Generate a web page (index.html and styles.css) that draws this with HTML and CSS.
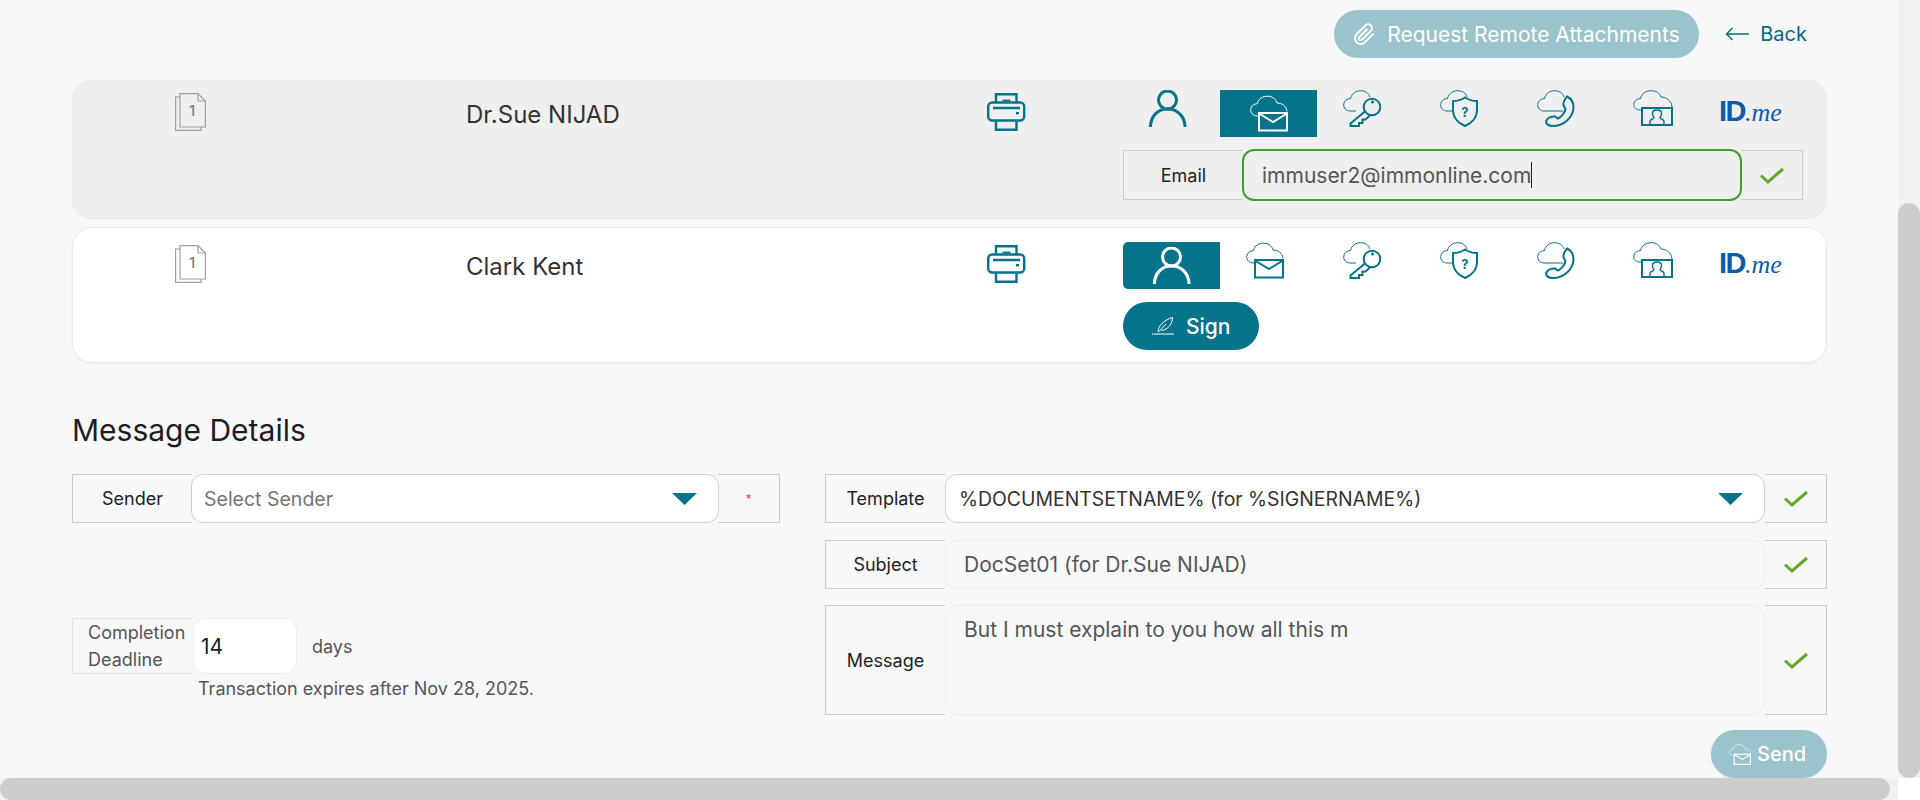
FILE: index.html
```html
<!DOCTYPE html>
<html lang="en">
<head>
<meta charset="utf-8">
<title>Message Details</title>
<link rel="stylesheet" href="styles.css">
</head>
<body>
<svg class="sprite" xmlns="http://www.w3.org/2000/svg">
  <symbol id="i-doc" viewBox="0 0 31 38">
    <path d="M5 .6H23L30.400 8V34H5Z" fill="none" stroke="currentColor" stroke-width="1.200"/>
    <path d="M23 .6V8H30.400M5 4H.6V37.400H26V34" fill="none" stroke="currentColor" stroke-width="1.200"/>
    <text x="17" y="23" text-anchor="middle" class="doc-num">1</text>
  </symbol>
  <symbol id="i-print" viewBox="0 0 40 38">
    <g fill="none" stroke="currentColor" stroke-width="2.400">
      <rect x="1.200" y="9.500" width="36" height="18" rx="4"/>
      <path d="M9 9V1.200H29.500V9M9 27V36.800H29.500V27M6 15H33"/>
      <path d="M15.500 7.500H23.500" stroke-width="1.800"/>
    </g>
    <rect x="29" y="19" width="3" height="2.400" fill="currentColor"/>
  </symbol>
  <symbol id="i-user" viewBox="0 0 38 37">
    <g fill="none" stroke="currentColor" stroke-width="3">
      <circle cx="18.500" cy="10" r="9"/>
      <path d="M1.500 37C1.500 26 9 19 18.500 19S36 26 36 37"/>
    </g>
  </symbol>
  <symbol id="i-mail" viewBox="0 0 38 36">
    <path d="M8 20.500C3 20.500 .5 17.500 .7 14C1 10.500 4 8.200 7.200 8.200C8.500 3 13 .5 18 .7C23 1 26 3.800 27 7.500C32 7.500 36.500 10.500 37 16" fill="none" stroke="currentColor"/>
    <g fill="none" stroke="currentColor" stroke-width="2">
      <rect x="9" y="17.500" width="28" height="17.500"/>
      <path d="M9 18L23 26.500L37 18"/>
    </g>
  </symbol>
  <symbol id="i-key" viewBox="0 0 38 37">
    <path d="M13 21H7C3 21 .5 18 .7 14.500C1 11 4 8.500 7.500 8.500C8.500 3.500 13 .7 17.500 .7C22 .7 25.500 3 27 7" fill="none" stroke="currentColor"/>
    <g fill="none" stroke="currentColor" stroke-width="2">
      <circle cx="29" cy="17" r="8.300"/>
      <path d="M22.500 21L7.500 33.500V36H16V33H19.500V29.500H22.500L27 25.200"/>
    </g>
    <circle cx="29.500" cy="12" r="1.500" fill="currentColor"/>
  </symbol>
  <symbol id="i-shield" viewBox="0 0 38 37">
    <path d="M12 21H7C3 21 .5 18 .7 14.500C1 11 4 8.500 7.500 8.500C8.500 3.500 13 .7 17.500 .7C22 .7 26 3 27 7" fill="none" stroke="currentColor"/>
    <path d="M13 11C19 11 22 9.500 25 7.500C28 9.500 32 11 37 11V20C37 28 31 33.500 25 36C19 33.500 13 28 13 20Z" fill="none" stroke="currentColor" stroke-width="2"/>
    <text x="25" y="27" text-anchor="middle" class="icon-q">?</text>
  </symbol>
  <symbol id="i-phone" viewBox="0 0 38 37">
    <path d="M26 21H7C3 21 .5 18 .7 14.500C1 11 4 8.500 7.500 8.500C8.500 3.500 13 .7 17.500 .7C22 .7 26 3 27 7" fill="none" stroke="currentColor"/>
    <path d="M30 6.500C34 8.500 36.500 12 36.500 17C36.500 27 27 36 16 36C11 36 8 33.500 9.500 30.500C11 27.500 15 26 18 26.500L21 28.500C24.500 27 28 22.500 28.500 19L26.500 15.500C26 13 28 9 30 6.500Z" fill="none" stroke="currentColor" stroke-width="2"/>
  </symbol>
  <symbol id="i-face" viewBox="0 0 40 36">
    <path d="M9 20H7C3 20 .7 17.500 .7 14.500C1 11 4 8.500 7.500 8.500C8.500 3.500 13 .7 18 .7C23 .7 27 3 28 7C33 7 38.500 10.500 39 17" fill="none" stroke="currentColor"/>
    <rect x="9" y="18" width="30" height="17" fill="none" stroke="currentColor" stroke-width="2"/>
    <path d="M17 34V31C17 29.500 21 29 21 27.500C19.500 26 19.500 24.500 19.500 23.500C19.500 21 21 20 24 20C27 20 28.500 21 28.500 23.500C28.500 24.500 28.500 26 27 27.500C27 29 31 29.500 31 31V34" fill="none" stroke="currentColor" stroke-width="1.400"/>
  </symbol>
  <symbol id="i-check" viewBox="0 0 24 17">
    <path d="M1 8.500L8 15L23 2" fill="none" stroke="currentColor" stroke-width="3"/>
  </symbol>
  <symbol id="i-caret" viewBox="0 0 25 12">
    <path d="M0 0H25L12.500 12Z" fill="currentColor"/>
  </symbol>
  <symbol id="i-clip" viewBox="0 0 24 24">
    <path d="M21.440 11.050l-9.190 9.190a6 6 0 0 1-8.490-8.490l9.190-9.190a4 4 0 0 1 5.660 5.660l-9.200 9.190a2 2 0 0 1-2.830-2.830l8.490-8.480" fill="none" stroke="currentColor" stroke-width="2"/>
  </symbol>
  <symbol id="i-arrow" viewBox="0 0 24 14">
    <path d="M24 7H1.500M7.500 1L1.500 7L7.500 13" fill="none" stroke="currentColor" stroke-width="1.400"/>
  </symbol>
  <symbol id="i-quill" viewBox="0 0 22 18">
    <path d="M2 17H22" stroke="currentColor" fill="none"/>
    <circle cx=".8" cy="17" r=".8" fill="currentColor"/>
    <path d="M6 14.500C6 9 12 3 20.500 .5C20.500 7 16 12.500 9.500 13.500M6.500 15L14 7" fill="none" stroke="currentColor"/>
  </symbol>
</svg>

<div class="shell">
  <main class="page">
    <div class="toolbar">
      <button class="pill pill-muted pill-request" type="button">
        <svg class="icon-clip"><use href="#i-clip"/></svg>
        <span>Request Remote Attachments</span>
      </button>
      <a class="back-link">
        <svg class="icon-arrow"><use href="#i-arrow"/></svg>
        <span>Back</span>
      </a>
    </div>

    <section class="card card-selected">
      <div class="doc-cell"><svg class="icon-doc"><use href="#i-doc"/></svg></div>
      <div class="signer-name">Dr.Sue NIJAD</div>
      <div class="print-cell"><svg class="icon-print"><use href="#i-print"/></svg></div>
      <div class="auth">
        <div class="auth-tabs">
          <div class="auth-tab"><svg class="icon-user"><use href="#i-user"/></svg></div>
          <div class="auth-tab is-active"><svg class="icon-cloud"><use href="#i-mail"/></svg></div>
          <div class="auth-tab"><svg class="icon-cloud"><use href="#i-key"/></svg></div>
          <div class="auth-tab"><svg class="icon-cloud"><use href="#i-shield"/></svg></div>
          <div class="auth-tab"><svg class="icon-cloud"><use href="#i-phone"/></svg></div>
          <div class="auth-tab"><svg class="icon-face"><use href="#i-face"/></svg></div>
          <div class="auth-tab"><span class="idme"><b>ID</b><i>.me</i></span></div>
        </div>
        <div class="field email-field">
          <div class="field-label">Email</div>
          <div class="field-control control-focus">immuser2@immonline.com<span class="text-caret"></span></div>
          <div class="field-end"><svg class="icon-check"><use href="#i-check"/></svg></div>
        </div>
      </div>
    </section>

    <section class="card card-plain">
      <div class="doc-cell"><svg class="icon-doc"><use href="#i-doc"/></svg></div>
      <div class="signer-name">Clark Kent</div>
      <div class="print-cell"><svg class="icon-print"><use href="#i-print"/></svg></div>
      <div class="auth">
        <div class="auth-tabs">
          <div class="auth-tab is-active is-first"><svg class="icon-user"><use href="#i-user"/></svg></div>
          <div class="auth-tab"><svg class="icon-cloud"><use href="#i-mail"/></svg></div>
          <div class="auth-tab"><svg class="icon-cloud"><use href="#i-key"/></svg></div>
          <div class="auth-tab"><svg class="icon-cloud"><use href="#i-shield"/></svg></div>
          <div class="auth-tab"><svg class="icon-cloud"><use href="#i-phone"/></svg></div>
          <div class="auth-tab"><svg class="icon-face"><use href="#i-face"/></svg></div>
          <div class="auth-tab"><span class="idme"><b>ID</b><i>.me</i></span></div>
        </div>
        <button class="pill pill-solid pill-sign" type="button">
          <svg class="icon-quill"><use href="#i-quill"/></svg>
          <span>Sign</span>
        </button>
      </div>
    </section>

    <h2 class="section-title">Message Details</h2>

    <div class="details">
      <div class="details-left">
        <div class="field">
          <div class="field-label">Sender</div>
          <div class="field-control control-select control-sender">
            <span class="placeholder">Select Sender</span>
            <svg class="icon-caret"><use href="#i-caret"/></svg>
          </div>
          <div class="field-end required">*</div>
        </div>
        <div class="deadline">
          <div class="deadline-label">Completion Deadline</div>
          <div class="deadline-input">14</div>
          <div class="deadline-unit">days</div>
        </div>
        <div class="deadline-note">Transaction expires after Nov 28, 2025.</div>
      </div>

      <div class="details-right">
        <div class="field">
          <div class="field-label">Template</div>
          <div class="field-control control-select control-template">
            <span>%DOCUMENTSETNAME% (for %SIGNERNAME%)</span>
            <svg class="icon-caret"><use href="#i-caret"/></svg>
          </div>
          <div class="field-end"><svg class="icon-check"><use href="#i-check"/></svg></div>
        </div>
        <div class="field">
          <div class="field-label">Subject</div>
          <div class="field-control control-readonly">DocSet01 (for Dr.Sue NIJAD)</div>
          <div class="field-end"><svg class="icon-check"><use href="#i-check"/></svg></div>
        </div>
        <div class="field field-tall">
          <div class="field-label">Message</div>
          <div class="field-control control-readonly control-area">But I must explain to you how all this m</div>
          <div class="field-end"><svg class="icon-check"><use href="#i-check"/></svg></div>
        </div>
      </div>
    </div>

    <div class="send-row">
      <button class="pill pill-muted pill-send" type="button">
        <svg class="icon-send"><use href="#i-mail"/></svg>
        <span>Send</span>
      </button>
    </div>
  </main>

  <div class="vscroll"><div class="vscroll-thumb"></div></div>
  <div class="hscroll"><div class="hscroll-thumb"></div></div>
  <div class="corner"></div>
</div>
</body>
</html>
```

FILE: styles.css
```css
* { box-sizing: border-box; }

html, body {
  margin: 0;
  height: 800px;
  overflow: hidden;
}

body {
  font-family: Inter, "Liberation Sans", sans-serif;
  color: #2b2b2b;
  background: #f7f8fa;
}

.sprite { display: none; }

.doc-num { font: 500 15px Inter, sans-serif; fill: #808080; }
.icon-q { font: 700 13px Inter, sans-serif; fill: currentColor; }

.shell {
  display: grid;
  grid-template-columns: 1898px 22px;
  grid-template-rows: 778px 22px;
  height: 800px;
}

.page {
  padding: 10px 71px 0 72px;
  overflow: hidden;
}

/* Scrollbars */
.vscroll { background: #f1f1f1; padding-top: 203px; }
.vscroll-thumb { height: 575px; background: #cdcdcd; border-radius: 11px; }
.hscroll { background: #f1f1f1; }
.hscroll-thumb { width: 1890px; height: 22px; background: #cdcdcd; border-radius: 11px; }
.corner { background: #fff; }

/* Toolbar */
.toolbar {
  display: flex;
  justify-content: flex-end;
  align-items: center;
  height: 48px;
  padding-right: 20px;
}

.pill {
  display: inline-flex;
  align-items: center;
  border: 0;
  color: #fff;
  font-family: Inter, sans-serif;
  border-radius: 24px;
}

.pill-muted { background: #9ac3cc; }
.pill-solid { background: #05738a; }

.pill-request {
  width: 365px;
  height: 48px;
  padding: 0 0 0 19px;
  font-size: 21px;
  font-weight: 400;
  gap: 11px;
}

.icon-clip { width: 23px; height: 23px; }

.back-link {
  display: flex;
  align-items: center;
  gap: 11px;
  margin-left: 26px;
  color: #05697f;
  font-size: 20px;
}

.icon-arrow { width: 24px; height: 14px; }

/* Signer cards */
.card {
  display: grid;
  grid-template-columns: 394px 519px 137px 1fr;
  align-items: start;
  border: 1px solid #e9eaec;
  border-radius: 20px;
}

.card-selected {
  height: 139px;
  margin-top: 22px;
  padding-top: 9px;
  background: #efefef;
}

.card-plain {
  height: 136px;
  margin-top: 8px;
  padding-top: 14px;
  background: #fff;
  box-shadow: 0 1px 2px rgba(0, 0, 0, .05);
}

.doc-cell { padding: 3px 0 0 102px; color: #a0a0a0; }
.icon-doc { display: block; width: 31px; height: 38px; }

.signer-name {
  font-size: 24px;
  line-height: 44px;
  margin: 3px 0 0 -1px;
  color: #333;
}

.print-cell { padding-top: 3px; color: #05738a; }
.icon-print { display: block; width: 40px; height: 38px; margin-left: 1px; }

.auth { padding-right: 23px; }

.auth-tabs {
  display: grid;
  grid-template-columns: repeat(7, 97.14px);
  height: 47px;
}

.auth-tab {
  display: flex;
  justify-content: center;
  padding-right: 8px;
  color: #05738a;
}

.auth-tab.is-active {
  background: #05738a;
  color: #fff;
  padding-right: 0;
  align-items: center;
}
.auth-tab.is-first { border-radius: 5px 0 0 5px; }

.icon-user { width: 38px; height: 37px; }
.icon-cloud { width: 38px; height: 37px; }
.icon-face { width: 40px; height: 36px; }

.idme {
  display: flex;
  align-items: baseline;
  margin-top: 8px;
  color: #0c5cab;
  line-height: 26px;
}
.idme b { font: 700 29px/26px "Liberation Sans", sans-serif; letter-spacing: -1.500px; }
.idme i { font: italic 400 26px/26px "Liberation Serif", serif; }

/* Form fields */
.field {
  display: flex;
  height: 49px;
  font-size: 18px;
}

.field-tall { height: 110px; }

.field-label {
  flex: 0 0 120px;
  display: flex;
  align-items: center;
  justify-content: center;
  border: 1px solid #cbcbcb;
  border-right: 0;
  color: #222;
}

.field-control {
  flex: 1;
  min-width: 0;
  display: flex;
  align-items: center;
  border-radius: 12px;
}

.field-end {
  flex: 0 0 62px;
  display: flex;
  align-items: center;
  justify-content: center;
  border: 1px solid #cbcbcb;
  border-left: 0;
  color: #6aa62a;
}

.icon-check { width: 24px; height: 17px; }

.email-field {
  height: 50px;
  margin-top: 13px;
}

.control-focus {
  margin: -1px;
  padding-left: 18px;
  border: 2px solid #419d2a;
  font-size: 21px;
  color: #555;
}

.text-caret {
  display: inline-block;
  width: 1px;
  height: 26px;
  background: #222;
}

.pill-sign {
  width: 136px;
  height: 48px;
  margin-top: 13px;
  padding-left: 29px;
  font-size: 21px;
  font-weight: 500;
  gap: 12px;
}

.icon-quill { width: 22px; height: 18px; }

/* Message details */
.section-title {
  margin: 48px 0 25px;
  font-size: 30px;
  font-weight: 400;
  line-height: 38px;
  color: #1d1d1d;
}

.details {
  display: grid;
  grid-template-columns: 708px 1fr;
  column-gap: 45px;
  align-items: start;
}

.details-right {
  display: flex;
  flex-direction: column;
  gap: 16.500px;
}

.control-select {
  justify-content: space-between;
  background: #fff;
  border: 1px solid #cfcfcf;
  padding: 0 21px 0 12px;
}

.control-sender {
  margin: 0 -1px;
  font-size: 19.500px;
}

.control-template {
  padding-left: 13px;
  font-size: 19.400px;
  color: #333;
}

.placeholder { color: #757575; }

.icon-caret { width: 25px; height: 12px; color: #05738a; }

.control-readonly {
  border: 1px solid #ebecee;
  padding-left: 18px;
  color: #555;
  font-size: 21px;
}

.control-area { align-items: flex-start; padding-top: 11px; }

.required { color: #d9547d; font-size: 12px; }

.deadline {
  display: flex;
  align-items: center;
  margin-top: 95px;
  height: 56px;
}

.deadline-label {
  flex: 0 0 120px;
  height: 56px;
  padding: 0 0 0 15px;
  border: 1px solid #e2e3e5;
  border-right: 0;
  font-size: 18px;
  line-height: 27px;
  color: #555;
}

.deadline-input {
  flex: 0 0 104px;
  display: flex;
  align-items: center;
  height: 56px;
  padding-left: 7px;
  margin-left: 1px;
  background: #fff;
  border: 1px solid #ecedef;
  border-radius: 12px;
  font-size: 21px;
  color: #222;
}

.deadline-unit {
  margin-left: 15px;
  font-size: 18px;
  color: #555;
}

.deadline-note {
  margin: 4px 0 0 126px;
  font-size: 18px;
  line-height: 22px;
  color: #555;
}

.send-row {
  display: flex;
  justify-content: flex-end;
  margin-top: 15px;
}

.pill-send {
  width: 116px;
  height: 48px;
  padding-left: 18px;
  font-size: 20px;
  font-weight: 500;
  gap: 6px;
  box-shadow: 0 1px 4px rgba(0, 0, 0, .06);
}

.icon-send { width: 22px; height: 21px; }
```
